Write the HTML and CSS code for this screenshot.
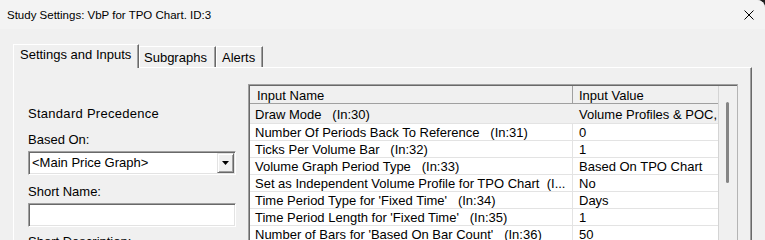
FILE: index.html
```html
<!DOCTYPE html>
<html>
<head>
<meta charset="utf-8">
<link rel="stylesheet" href="styles.css">
</head>
<body>
<div class="window">
  <div class="titlebar">
    <span class="title">Study Settings: VbP for TPO Chart. ID:3</span>
    <svg class="close" width="10" height="10" viewBox="0 0 10 10"><path d="M0.5 0.5L9.5 9.5M9.5 0.5L0.5 9.5" stroke="#000" stroke-width="1" fill="none"/></svg>
  </div>
  <div class="content">
    <div class="tabs">
      <div class="tab active">Settings and Inputs</div>
      <div class="tab t-sub">Subgraphs</div>
      <div class="tab t-alerts">Alerts</div>
    </div>
    <div class="panel">
      <div class="left">
        <div class="label l-prec">Standard Precedence</div>
        <div class="label l-based">Based On:</div>
        <div class="combo">
          <span class="combo-text">&lt;Main Price Graph&gt;</span>
          <span class="combo-btn"><svg width="7" height="4" viewBox="0 0 7 4"><polygon points="0,0 7,0 3.5,4" fill="#000"/></svg></span>
        </div>
        <div class="label l-short">Short Name:</div>
        <div class="textbox"></div>
        <div class="label l-desc">Short Description:</div>
      </div>
      <div class="grid">
        <div class="grid-inner">
          <div class="grid-main">
            <div class="row head"><div class="c-name">Input Name</div><div class="c-val">Input Value</div></div>
            <div class="row sel"><div class="c-name">Draw Mode   (In:30)</div><div class="c-val">Volume Profiles &amp; POC,</div></div>
            <div class="row"><div class="c-name">Number Of Periods Back To Reference   (In:31)</div><div class="c-val">0</div></div>
            <div class="row"><div class="c-name">Ticks Per Volume Bar   (In:32)</div><div class="c-val">1</div></div>
            <div class="row"><div class="c-name">Volume Graph Period Type   (In:33)</div><div class="c-val">Based On TPO Chart</div></div>
            <div class="row"><div class="c-name">Set as Independent Volume Profile for TPO Chart  (I...</div><div class="c-val">No</div></div>
            <div class="row"><div class="c-name">Time Period Type for 'Fixed Time'   (In:34)</div><div class="c-val">Days</div></div>
            <div class="row"><div class="c-name">Time Period Length for 'Fixed Time'   (In:35)</div><div class="c-val">1</div></div>
            <div class="row"><div class="c-name">Number of Bars for 'Based On Bar Count'   (In:36)</div><div class="c-val">50</div></div>
          </div>
          <div class="vscroll"><div class="thumb"></div></div>
        </div>
      </div>
    </div>
  </div>
</div>
</body>
</html>
```

FILE: styles.css
```css
* { box-sizing: border-box; }
html { background: #1f1f1f; }
html, body { margin: 0; padding: 0; }
body {
  width: 765px;
  height: 240px;
  overflow: hidden;
  font-family: "Liberation Sans", Arial, sans-serif;
  font-size: 13px;
  line-height: 15px;
  color: #000;
}
.window {
  width: 765px;
  height: 240px;
  background: #f0f0f0;
  border-top-right-radius: 8px;
  overflow: hidden;
}
.titlebar {
  height: 29px;
  background: #f3f3f3;
  display: flex;
  align-items: center;
  justify-content: space-between;
  padding: 1px 11px 0 7px;
}
.title { font-size: 11.5px; line-height: 15px; color: #000; }
.close { display: block; }

.content { padding: 15px 13px 0 13px; }
.tabs { display: flex; align-items: flex-end; }
.tab {
  height: 21px;
  border-top: 1px solid #fff;
  border-left: 1px solid #fff;
  border-right: 1px solid #696969;
  box-shadow: inset -1px 0 #a0a0a0;
  padding-top: 3px;
  white-space: nowrap;
}
.tab.active {
  width: 126px;
  height: 24px;
  padding: 2px 0 0 6px;
  margin-bottom: -1px;
  position: relative;
  z-index: 1;
  background: #f0f0f0;
}
.t-sub { width: 77px; padding-left: 4px; }
.t-alerts { width: 47px; padding-left: 5px; }

.panel {
  height: 200px;
  display: flex;
  padding-left: 14px;
  border-top: 1px solid #fff;
  border-left: 1px solid #fff;
  border-right: 1px solid #696969;
  box-shadow: inset -1px 0 #a0a0a0;
}
.left { width: 208px; padding-top: 38px; }
.label { white-space: nowrap; }
.l-prec { letter-spacing: 0.28px; }
.l-based { margin-top: 11px; }
.l-short { margin-top: 9px; }
.l-desc { margin-top: 7px; }

.combo, .textbox {
  height: 24px;
  background: #fff;
  border: 1px solid;
  border-color: #a0a0a0 #fff #fff #a0a0a0;
  box-shadow: inset 1px 1px #696969, inset -1px -1px #e3e3e3;
  padding: 1px;
}
.combo { margin-top: 4px; display: flex; }
.combo-text { flex: 1; padding: 2px 0 0 2px; white-space: nowrap; }
.combo-btn {
  width: 17px;
  background: #f0f0f0;
  border: 1px solid;
  border-color: #e3e3e3 #696969 #696969 #e3e3e3;
  box-shadow: inset 1px 1px #fff, inset -1px -1px #a0a0a0;
  display: flex;
  align-items: center;
  justify-content: center;
}
.combo-btn svg { display: block; }
.textbox { margin-top: 4px; }

.grid {
  margin-left: 12px;
  margin-top: 16px;
  width: 490px;
  height: 170px;
  border: 1px solid #a0a0a0;
  border-right-color: #b4b4b4;
}
.grid-inner {
  display: flex;
  height: 100%;
  border-top: 1px solid #696969;
  border-left: 1px solid #696969;
}
.grid-main {
  width: 469px;
  border-right: 1px solid #d4d4d4;
  background: #fff;
}
.row { display: flex; height: 17px; border-bottom: 1px solid #e3e3e3; }
.row > div { white-space: pre; overflow: hidden; padding-top: 1px; }
.c-name { width: 323px; padding-left: 5px; border-right: 1px solid #e3e3e3; }
.c-val { width: 145px; padding-left: 6px; }
.row.head { background: #f0f0f0; height: 18px; border-bottom-color: #a0a0a0; }
.row.head > div { padding-top: 2px; }
.row.head .c-name { padding-left: 7px; border-right-color: #a0a0a0; }
.row.sel { background: #f0f0f0; height: 20px; border-bottom-color: #e3e3e3; }
.row.sel > div { padding-top: 3px; }
.row.sel .c-name { border-right-color: #f0f0f0; }

.vscroll { width: 18px; background: #f0f0f0; padding: 16px 0 0 7px; }
.thumb { width: 3px; height: 81px; background: #858585; border-radius: 1.5px; }
```
